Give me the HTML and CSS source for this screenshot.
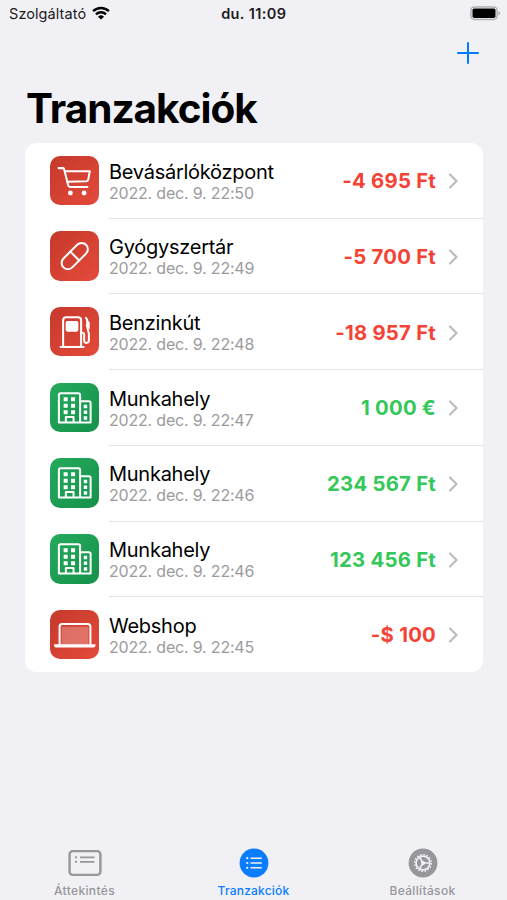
FILE: index.html
```html
<!DOCTYPE html>
<html lang="hu">
<head>
<meta charset="utf-8">
<meta name="viewport" content="width=device-width, initial-scale=1">
<title>Tranzakciók</title>
<link rel="stylesheet" href="styles.css">
</head>
<body>
<svg class="defs" width="0" height="0" aria-hidden="true">
  <defs>
    <symbol id="cart" viewBox="0 0 49 49"><g class="line"><path d="M8.500 12h4.200c.7 0 1.100.3 1.300 1l4 16c.3 1.200.9 1.700 2 1.700H37"/><path d="M14.800 15h24.600l-1.500 8.200c-.2 1.200-.8 1.700-2 1.800L17.200 25.500"/></g><circle class="solid" cx="20.200" cy="36.600" r="2.400"/><circle class="solid" cx="33.700" cy="36.600" r="2.400"/></symbol>
    <symbol id="pill" viewBox="0 0 49 49"><g class="line" transform="rotate(-45 24.500 24.800)"><rect x="8.700" y="18.600" width="31.600" height="12.400" rx="6.200"/><path d="M24.500 18.600V31"/></g></symbol>
    <symbol id="fuel" viewBox="0 0 49 49"><g class="line"><path d="M13 39V13.200c0-2 1-3 3-3h11.800c2 0 3 1 3 3V39M10.500 39.500h22.800"/><path d="M31 25.500h.8c1.400 0 2 .7 2 2V33c0 3.400 4.700 3.400 4.700 0v-6.500L36.800 19v-6.500l-1.300-1.700"/></g><rect class="solid" x="15.500" y="13.800" width="12.600" height="10.600" rx="1.800"/><path class="solid" d="M35.200 10.800 39.300 15v7l-4-3.500 1.500-3z"/></symbol>
    <symbol id="office" viewBox="0 0 49 49"><g class="line"><path d="M8.800 39V12c0-1.200.6-1.800 1.800-1.800H28c1.200 0 1.800.6 1.800 1.800v27zM29.800 18h8.600c1.200 0 1.800.6 1.800 1.800V39H29.800"/><path d="M15.700 38.500v-4.800h7.600v4.800"/></g><path class="solid" d="M13.500 14h4v4h-4zm7.300 0h4v4h-4zm-7.300 6.500h4v4h-4zm7.300 0h4v4h-4zM13.500 27h4v4h-4zm7.300 0h4v4h-4zM33.400 21.500h3.400V25h-3.400zm0 5.700h3.400v3.500h-3.400zm0 5.700h3.400v3.500h-3.400z"/></symbol>
    <symbol id="laptop" viewBox="0 0 49 49"><rect class="screen" x="11.500" y="16.500" width="26.500" height="18"/><path class="line" d="M9.500 34V16.500c0-1.800.8-2.600 2.600-2.600h25.300c1.800 0 2.600.8 2.600 2.600V34"/><path class="solid" d="M4 34h41v1c0 1.300-.7 2-2 2H6c-1.300 0-2-.7-2-2z"/></symbol>
    <symbol id="chevron" viewBox="0 0 10 16"><path d="m2 1.500 6.500 6.500L2 14.500"/></symbol>
  </defs>
</svg>
<div class="app">
  <header class="status">
    <div class="carrier"><span class="carrier-name">Szolgáltató</span>
      <svg class="wifi" viewBox="0 0 18 14"><path class="arc" d="M1.100 5.200a11.300 11.300 0 0 1 15.800 0M4 8.300a7.100 7.100 0 0 1 10 0"/><path d="M9 13.600 6 10.700a4.300 4.300 0 0 1 6 0z"/></svg>
    </div>
    <span class="clock">du. 11:09</span>
    <div class="battery-slot"><svg class="battery" viewBox="0 0 31 15"><rect class="shell" x=".9" y=".9" width="26.200" height="12.700" rx="3.600"/><rect x="2.500" y="2.500" width="23" height="9.500" rx="1.800"/><path class="tip" d="M28.500 5c2.300.8 2.300 3.700 0 4.500z"/></svg></div>
  </header>
  <div class="toolbar"><svg class="plus" viewBox="0 0 22 22"><path d="M11 1v20M1 11h20"/></svg></div>
  <h1 class="title">Tranzakciók</h1>
  <main class="card">
    <article class="row">
      <svg class="tile red"><use href="#cart"/></svg>
      <div class="content"><div class="text"><span class="name">Bevásárlóközpont</span><span class="date">2022. dec. 9. 22:50</span></div><span class="amount minus">-4 695 Ft</span><svg class="chevron"><use href="#chevron"/></svg></div>
    </article>
    <article class="row">
      <svg class="tile red"><use href="#pill"/></svg>
      <div class="content"><div class="text"><span class="name">Gyógyszertár</span><span class="date">2022. dec. 9. 22:49</span></div><span class="amount minus">-5 700 Ft</span><svg class="chevron"><use href="#chevron"/></svg></div>
    </article>
    <article class="row">
      <svg class="tile red"><use href="#fuel"/></svg>
      <div class="content"><div class="text"><span class="name">Benzinkút</span><span class="date">2022. dec. 9. 22:48</span></div><span class="amount minus">-18 957 Ft</span><svg class="chevron"><use href="#chevron"/></svg></div>
    </article>
    <article class="row">
      <svg class="tile green"><use href="#office"/></svg>
      <div class="content"><div class="text"><span class="name">Munkahely</span><span class="date">2022. dec. 9. 22:47</span></div><span class="amount plus-sum">1 000 €</span><svg class="chevron"><use href="#chevron"/></svg></div>
    </article>
    <article class="row">
      <svg class="tile green"><use href="#office"/></svg>
      <div class="content"><div class="text"><span class="name">Munkahely</span><span class="date">2022. dec. 9. 22:46</span></div><span class="amount plus-sum">234 567 Ft</span><svg class="chevron"><use href="#chevron"/></svg></div>
    </article>
    <article class="row">
      <svg class="tile green"><use href="#office"/></svg>
      <div class="content"><div class="text"><span class="name">Munkahely</span><span class="date">2022. dec. 9. 22:46</span></div><span class="amount plus-sum">123 456 Ft</span><svg class="chevron"><use href="#chevron"/></svg></div>
    </article>
    <article class="row">
      <svg class="tile red"><use href="#laptop"/></svg>
      <div class="content"><div class="text"><span class="name">Webshop</span><span class="date">2022. dec. 9. 22:45</span></div><span class="amount minus">-$ 100</span><svg class="chevron"><use href="#chevron"/></svg></div>
    </article>
  </main>
  <nav class="tabs">
    <div class="tab"><svg class="tab-icon wide" viewBox="0 0 34 30"><rect class="stroke" x="1.600" y="3.100" width="30.800" height="23.800" rx="3.200"/><path class="stroke thin" d="M12 9.300h14.500M12 13.800h14.500"/><path class="stroke dots" d="M8 9.300h.1M8 13.800h.1"/></svg><span>Áttekintés</span></div>
    <div class="tab active"><svg class="tab-icon" viewBox="0 0 30 30"><circle cx="15" cy="15" r="14.400"/><path class="cut" d="M11.500 10.200h11.300M11.500 15h11.300M11.500 19.800h11.300"/><path class="cut dots" d="M8.200 10.200h.1M8.200 15h.1M8.200 19.800h.1"/></svg><span>Tranzakciók</span></div>
    <div class="tab"><svg class="tab-icon" viewBox="0 0 30 30"><circle cx="15" cy="15" r="14.400"/><circle class="cut" cx="15" cy="15" r="6.900"/><circle class="cut teeth" cx="15" cy="15" r="8.300"/><path class="cut" d="M15 15h6.500M15 15l-3.300-5.700M15 15l-3.300 5.700"/><circle class="hub" cx="15" cy="15" r="2"/></svg><span>Beállítások</span></div>
  </nav>
</div>
</body>
</html>
```
FILE: styles.css
```css
* { box-sizing: border-box; }
body {
  margin: 0;
  background: #f1f0f5;
  color: #000;
  font-family: Inter, "Liberation Sans", sans-serif;
}
.defs { display: block; height: 0; }
.app { display: flex; flex-direction: column; width: 507px; height: 900px; overflow: hidden; }

.status {
  display: grid;
  grid-template-columns: 1fr auto 1fr;
  align-items: center;
  height: 28px;
  padding: 0 6px 0 9px;
  font-size: 14.5px;
  line-height: 18px;
  color: #1c1c1e;
}
.carrier { display: flex; align-items: center; gap: 6px; }
.carrier-name { letter-spacing: .08px; }
.wifi { width: 18px; height: 14px; fill: #000; margin-top: -2px; }
.wifi .arc { fill: none; stroke: #000; stroke-width: 2.4; }
.clock { font-weight: 600; letter-spacing: .4px; margin-left: -2.5px; }
.battery-slot { display: flex; justify-content: flex-end; }
.battery { width: 31px; height: 15px; margin-top: -1px; }
.battery .shell { fill: #f1f0f5; stroke: #b0b0b3; stroke-width: 1.5; }
.battery .tip { fill: #b0b0b3; }

.toolbar { display: flex; justify-content: flex-end; height: 54px; padding: 14px 28px 0 0; }
.plus { width: 22px; height: 22px; fill: none; stroke: #007aff; stroke-width: 2; stroke-linecap: round; }

.title { margin: 0; padding-left: 26px; height: 60.5px; font-size: 40.5px; line-height: 54px; font-weight: 700; letter-spacing: -1px; }

.card { flex: none; width: 457.5px; margin-left: 25px; background: #fff; border-radius: 12px; overflow: hidden; }
.row { display: flex; align-items: center; height: 75.7px; padding-left: 24.5px; }
.tile { flex: none; width: 49.5px; height: 49.5px; border-radius: 10px; color: #fff; }
.red { background: linear-gradient(135deg, #c5392b, #e44a3b); }
.green { background: linear-gradient(135deg, #25aa5d, #15914a); }
.line { fill: none; stroke: #fff; stroke-width: 2; stroke-linecap: round; stroke-linejoin: round; }
.solid { fill: #fff; }
.screen { fill: #fff; fill-opacity: .25; }
.content { flex: 1; display: flex; align-items: center; align-self: stretch; margin: 0 0 -.6px 10px; padding: 2px 25px 0 0; border-bottom: 1px solid #e3e3e5; }
.row:last-child .content { border-bottom-color: transparent; }
.text { display: flex; flex-direction: column; flex: 1; }
.name { font-size: 20px; line-height: 24px; letter-spacing: -.26px; }
.date { font-size: 16px; line-height: 19px; letter-spacing: -.19px; color: #9b9b9e; }
.amount { font-size: 20.3px; line-height: 24px; font-weight: 650; letter-spacing: .25px; }
.minus { color: #f44336; }
.plus-sum { color: #34c759; }
.chevron { width: 10px; height: 16px; margin-left: 11.500px; fill: none; stroke: #bcbcc0; stroke-width: 2.200; stroke-linecap: round; stroke-linejoin: round; }

.tabs { display: grid; grid-template-columns: repeat(3, 1fr); margin-top: auto; height: 52px; }
.tab { display: flex; flex-direction: column; align-items: center; color: #96969b; font-size: 12px; line-height: 15px; font-weight: 500; letter-spacing: .35px; gap: 5px; }
.active { color: #087dff; letter-spacing: .2px; }
.tab-icon { width: 30px; height: 30px; fill: currentColor; }
.wide { width: 34px; }
.stroke { fill: none; stroke: currentColor; stroke-width: 2.400; }
.thin { stroke-width: 1.700; }
.cut { fill: none; stroke: #f1f0f5; stroke-width: 1.600; }
.dots { stroke-width: 2.200; stroke-linecap: round; }
.teeth { stroke-width: 1.500; stroke-dasharray: 1.630 1.630; }
.hub { fill: #f1f0f5; }
```
